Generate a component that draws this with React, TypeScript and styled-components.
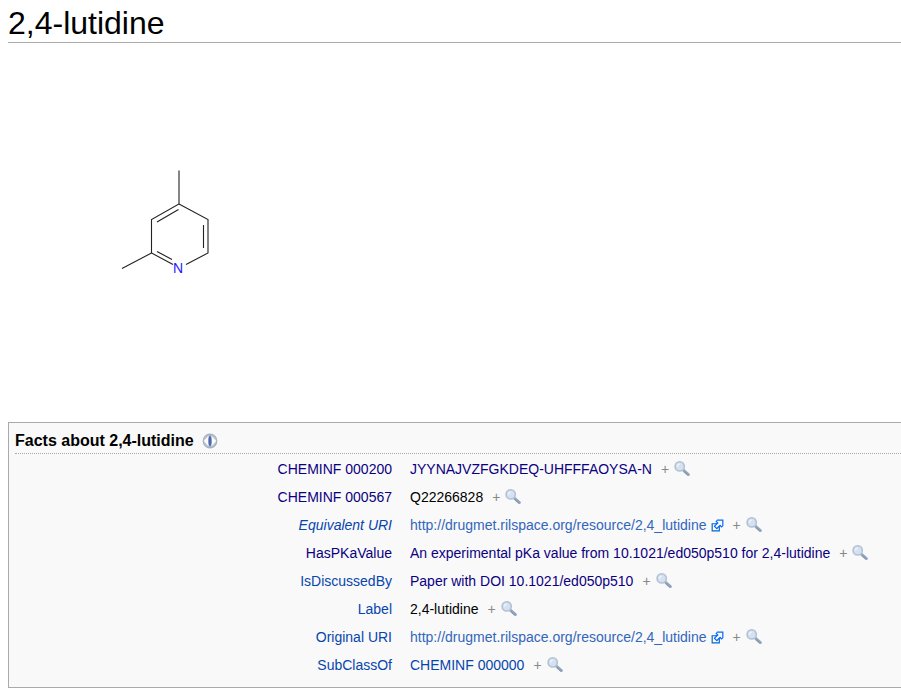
import React from "react";
import styled, { createGlobalStyle } from "styled-components";

const GlobalStyle = createGlobalStyle`
  * { box-sizing: border-box; }
  body {
    margin: 0;
    background: #fff;
    color: #000;
    font-family: "Liberation Sans", Arial, sans-serif;
    font-size: 14px;
  }
`;

const Page = styled.main`
  padding-left: 8px;
`;

const Title = styled.h1`
  margin: 0;
  padding: 4px 0 0;
  height: 43px;
  line-height: 38px;
  font-size: 32px;
  font-weight: 400;
  border-bottom: 1px solid #aaa;
`;

const Structure = styled.figure`
  margin: 0;
  padding: 24px 0 55px 22px;

  svg {
    display: block;
  }
`;

const FactBox = styled.section`
  padding: 5px 0 8px 6px;
  background: #f9f9f9;
  border: 1px solid #aaa;
  border-right: 0;
`;

const FactHeader = styled.h2`
  display: flex;
  align-items: center;
  gap: 8px;
  margin: 0 0 1px;
  height: 26px;
  font-size: 16px;
  font-weight: 700;
  border-bottom: 1px dotted #aaa;
`;

const FactTable = styled.table`
  width: 100%;
  border-collapse: collapse;
  table-layout: fixed;
`;

const Property = styled.th`
  width: 386px;
  height: 28px;
  padding: 0 9px 0 0;
  text-align: right;
  font-weight: 400;
`;

const Value = styled.td`
  height: 28px;
  padding: 0 0 0 9px;
`;

const ValueLine = styled.div`
  display: flex;
  align-items: center;
  white-space: nowrap;
`;

type Tone = "visited" | "link" | "external";

const tones: Record<Tone, string> = {
  visited: "#0b0080",
  link: "#0645ad",
  external: "#3366bb",
};

const WikiLink = styled.a<{ $tone: Tone; $italic?: boolean }>`
  display: inline-flex;
  align-items: center;
  gap: 4px;
  color: ${({ $tone }) => tones[$tone]};
  font-style: ${({ $italic }) => ($italic ? "italic" : "normal")};
  text-decoration: none;
`;

const Plus = styled.span`
  margin: 0 5px 0 9px;
  color: #888;
`;

const SearchLink = styled.a`
  display: flex;
`;

const InfoButton = styled.button`
  display: flex;
  padding: 0;
  border: 0;
  background: none;
`;

const SearchIcon = () => (
  <svg width="16" height="16" viewBox="0 0 16 16" aria-hidden="true">
    <path d="M9.600 9.400 14.400 13.600" stroke="#93a4bd" strokeWidth="2.8" strokeLinecap="round" />
    <path d="M10 10.600 13.800 14" stroke="#8193ae" strokeWidth="1" />
    <circle cx="5.700" cy="5.400" r="4.600" fill="#d4e1f1" stroke="#b3c1d5" strokeWidth="1.6" />
    <path d="M3.500 5.600A2.600 2.600 0 0 1 6 3.100" fill="none" stroke="#edf4fb" strokeWidth="1.4" />
  </svg>
);

const ExternalIcon = () => (
  <svg width="13" height="13" viewBox="0 0 11 11" aria-hidden="true">
    <path d="M1 4h6v6H1z" fill="#fff" stroke="#06c" />
    <path d="M5.265 .5H10.500v5.390L8.927 7.437 7.617 6.127 4.893 8.850 2.203 6.162 5.013 3.354 3.700 2.044z" fill="#06f" />
    <path d="M9.495 1.504 9.517 6.389 7.700 4.570 4.820 7.450 3.590 6.223 6.472 3.343 4.622 1.491z" fill="#fff" />
  </svg>
);

const InfoIcon = () => (
  <svg width="16" height="16" viewBox="0 0 16 16" aria-hidden="true">
    <circle cx="8" cy="8" r="6.800" fill="#bcc6d8" stroke="#a9b1bf" strokeWidth="1.2" />
    <path d="M6.500 3 1.800 8 6.500 13ZM9.500 3 14.200 8 9.500 13Z" fill="#fff" />
    <path d="M8 1.200 9.900 6 9.900 10 8 14.800 6.100 10 6.100 6Z" fill="#7f93c2" />
    <path d="M8 3.500v9" stroke="#4260a2" strokeWidth="1.600" />
  </svg>
);

const Molecule = () => (
  <svg width="300" height="300" viewBox="30 67 300 300" role="img" aria-label="2,4-lutidine structure">
    <g fill="none" stroke="#222" strokeWidth="1.1">
      <path d="M179 170.500V204L151.500 219.500V253L173 264.500" />
      <path d="M179 204 208 219.500V253L186 264.500" />
      <path d="M151.500 253 122 268.500" />
      <path d="M178.500 209.500 157 222M203.500 225V248M157 251.500 172 259.500" />
    </g>
    <text x="178" y="273" textAnchor="middle" fontSize="14" fill="#1a1aff">
      N
    </text>
  </svg>
);

interface Fact {
  property: string;
  propertyTone: Tone;
  italic?: boolean;
  value: string;
  valueTone?: Tone;
}

const facts: Fact[] = [
  { property: "CHEMINF 000200", propertyTone: "visited", value: "JYYNAJVZFGKDEQ-UHFFFAOYSA-N", valueTone: "visited" },
  { property: "CHEMINF 000567", propertyTone: "visited", value: "Q22266828" },
  {
    property: "Equivalent URI",
    propertyTone: "link",
    italic: true,
    value: "http://drugmet.rilspace.org/resource/2,4_lutidine",
    valueTone: "external",
  },
  {
    property: "HasPKaValue",
    propertyTone: "visited",
    value: "An experimental pKa value from 10.1021/ed050p510 for 2,4-lutidine",
    valueTone: "visited",
  },
  { property: "IsDiscussedBy", propertyTone: "link", value: "Paper with DOI 10.1021/ed050p510", valueTone: "visited" },
  { property: "Label", propertyTone: "link", value: "2,4-lutidine" },
  {
    property: "Original URI",
    propertyTone: "link",
    value: "http://drugmet.rilspace.org/resource/2,4_lutidine",
    valueTone: "external",
  },
  { property: "SubClassOf", propertyTone: "link", value: "CHEMINF 000000", valueTone: "link" },
];

const FactRow = ({ property, propertyTone, italic, value, valueTone }: Fact) => (
  <tr>
    <Property scope="row">
      <WikiLink href="#" $tone={propertyTone} $italic={italic}>
        {property}
      </WikiLink>
    </Property>
    <Value>
      <ValueLine>
        {valueTone ? (
          <WikiLink href="#" $tone={valueTone}>
            {value}
            {valueTone === "external" && <ExternalIcon />}
          </WikiLink>
        ) : (
          <span>{value}</span>
        )}
        <Plus>+</Plus>
        <SearchLink href="#" aria-label={`Search ${property}`}>
          <SearchIcon />
        </SearchLink>
      </ValueLine>
    </Value>
  </tr>
);

export default function App() {
  return (
    <>
      <GlobalStyle />
      <Page>
        <Title>2,4-lutidine</Title>
        <Structure>
          <Molecule />
        </Structure>
        <FactBox>
          <FactHeader>
            Facts about 2,4-lutidine
            <InfoButton type="button" aria-label="About these facts">
              <InfoIcon />
            </InfoButton>
          </FactHeader>
          <FactTable>
            <tbody>
              {facts.map((fact) => (
                <FactRow key={fact.property} {...fact} />
              ))}
            </tbody>
          </FactTable>
        </FactBox>
      </Page>
    </>
  );
}
